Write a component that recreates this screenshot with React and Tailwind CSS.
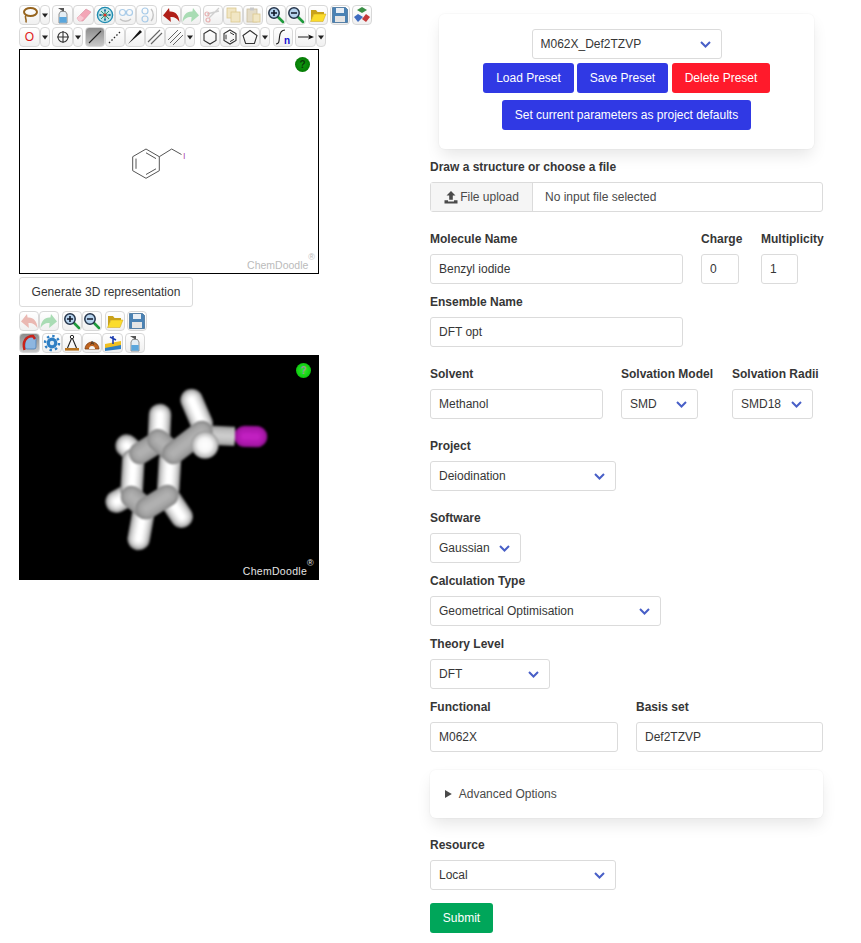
const Svg = ({ children }) => (
    <svg viewBox="0 0 18 18" className="w-[18px] h-[18px] block">{children}</svg>
);

const Lasso = () => (
    <Svg>
        <ellipse cx="9.5" cy="6" rx="6.5" ry="4" fill="none" stroke="#96641e" strokeWidth="2" />
        <path d="M5 9.5c-2 2 1 3 0 7" fill="none" stroke="#96641e" strokeWidth="1.6" />
    </Svg>
);
const Bottle = () => (
    <Svg>
        <path d="M4 2h6v3H8.5z" fill="#555" />
        <path d="M6.5 5.5h5l1.5 2.5v9H5V8z" fill="#e4eef5" stroke="#666" strokeWidth="0.7" />
        <rect x="5.3" y="11" width="7.4" height="5.7" fill="#5aa6dc" />
    </Svg>
);
const Eraser = () => (
    <Svg>
        <polygon points="2,12 11,3 16,6 8,15 4,15" fill="#f3a6b7" stroke="#d9909f" strokeWidth="0.6" />
        <polygon points="2,12 5,9 9,12 6,15 4,15" fill="#f8c8d2" />
    </Svg>
);
const Center = () => (
    <Svg>
        <circle cx="9" cy="9" r="7.6" fill="#bfe3ea" stroke="#1f8bb0" strokeWidth="1.4" />
        <path d="M9 3v12M3 9h12M5 5l8 8M13 5L5 13" stroke="#1a8f6a" strokeWidth="0.9" />
        <circle cx="9" cy="9" r="1.6" fill="#d9332a" />
        <circle cx="9" cy="4.5" r="1" fill="#1f6bb0" />
        <circle cx="9" cy="13.5" r="1" fill="#1f6bb0" />
        <circle cx="4.5" cy="9" r="1" fill="#1f6bb0" />
        <circle cx="13.5" cy="9" r="1" fill="#1f6bb0" />
    </Svg>
);
const FlipH = () => (
    <Svg>
        <circle cx="5.5" cy="6.5" r="3" fill="none" stroke="#a9cbe8" strokeWidth="1.2" />
        <circle cx="12.5" cy="6.5" r="3" fill="none" stroke="#a9cbe8" strokeWidth="1.2" />
        <path d="M3 13c3 3 8 3 11 0" fill="none" stroke="#c4c4c4" strokeWidth="1.4" />
    </Svg>
);
const FlipV = () => (
    <Svg>
        <circle cx="7" cy="5" r="3" fill="none" stroke="#a9cbe8" strokeWidth="1.2" />
        <circle cx="7" cy="13" r="3" fill="none" stroke="#a9cbe8" strokeWidth="1.2" />
        <path d="M13 3c3 3 3 9 0 12" fill="none" stroke="#c4c4c4" strokeWidth="1.4" />
    </Svg>
);
const Undo = ({ faded }) => (
    <Svg>
        <path d="M1 9.5L7 2l.6 3.6C13 5 17 9 17.5 16 15 12 12 10.5 8.4 11l.5 5z" fill={faded ? "#eab8b2" : "#b01f18"} />
    </Svg>
);
const Redo = () => (
    <Svg>
        <path d="M17 9.5L11 2l-.6 3.6C5 5 1 9 .5 16 3 12 6 10.5 9.6 11l-.5 5z" fill="#a9dcb4" />
    </Svg>
);
const Scissors = () => (
    <Svg>
        <path d="M15 2L5 12M15 5L3 8" stroke="#cfcfcf" strokeWidth="1.3" />
        <circle cx="4" cy="14" r="2" fill="none" stroke="#e7b0b0" strokeWidth="1.2" />
        <circle cx="3" cy="8" r="2" fill="none" stroke="#e7b0b0" strokeWidth="1.2" />
    </Svg>
);
const Copy = () => (
    <Svg>
        <rect x="3" y="2" width="9" height="10" fill="#f1e6c4" stroke="#dcc98e" strokeWidth="0.8" />
        <rect x="7" y="6" width="9" height="10" fill="#f1e6c4" stroke="#dcc98e" strokeWidth="0.8" />
    </Svg>
);
const Paste = () => (
    <Svg>
        <rect x="3" y="3" width="10" height="13" fill="#e4dcc8" stroke="#cbbf9f" strokeWidth="0.8" />
        <rect x="6" y="1.5" width="4" height="3" fill="#c9c9c9" />
        <rect x="9" y="8" width="7" height="8" fill="#f1e6c4" stroke="#dcc98e" strokeWidth="0.8" />
    </Svg>
);
const Zoom = ({ plus }) => (
    <Svg>
        <path d="M10 10l6 6" stroke="#1f9a3c" strokeWidth="2.6" strokeLinecap="round" />
        <circle cx="7" cy="7" r="5.2" fill="#b6d3ee" stroke="#24344a" strokeWidth="1.5" />
        <path d="M4 7h6" stroke="#10182a" strokeWidth="1.6" />
        {plus && <path d="M7 4v6" stroke="#10182a" strokeWidth="1.6" />}
    </Svg>
);
const Folder = () => (
    <Svg>
        <path d="M2 15V4h5l1.5 2H15v2H5z" fill="#c9a21a" />
        <path d="M1.5 15.5L5 8h12l-3 7.5z" fill="#fbdc2c" stroke="#c9a21a" strokeWidth="0.5" />
    </Svg>
);
const Save = () => (
    <Svg>
        <path d="M1.5 1.5h13l2 2v13h-15z" fill="#4a82b4" stroke="#2a5a88" strokeWidth="0.6" />
        <rect x="5" y="2" width="8" height="5" fill="#e8eef5" />
        <rect x="4" y="10" width="10" height="6" fill="#e4e4e4" />
    </Svg>
);
const Templates = () => (
    <Svg>
        <polygon points="9,1 14,4 9,7 4,4" fill="#3a8f45" />
        <polygon points="5,8 10,11 5,16 1,11" fill="#3f6cc0" />
        <polygon points="13,8 17,11 13,16 9,13" fill="#c43a3a" />
    </Svg>
);
const Caret = () => (
    <svg viewBox="0 0 8 8" className="w-2 h-2 block">
        <path d="M1 2.5h6L4 6.5z" fill="#222" />
    </svg>
);
const Plus = () => (
    <Svg>
        <circle cx="9" cy="9" r="5" fill="none" stroke="#333" strokeWidth="1.1" />
        <path d="M9 3v12M3 9h12" stroke="#333" strokeWidth="1.1" />
    </Svg>
);
const Bond = () => (
    <Svg>
        <path d="M3 15L15 3" stroke="#222" strokeWidth="1.1" />
    </Svg>
);
const Dots = () => (
    <Svg>
        <path d="M3 15L15 3" stroke="#222" strokeWidth="1.3" strokeDasharray="1.5 2" />
    </Svg>
);
const Wedge = () => (
    <Svg>
        <polygon points="2,16 14,2 16,4" fill="#111" />
    </Svg>
);
const DoubleBond = () => (
    <Svg>
        <path d="M2 14L14 2M5 16L16 5" stroke="#666" strokeWidth="1.1" />
    </Svg>
);
const TripleBond = () => (
    <Svg>
        <path d="M2 12L12 2M4 15L15 4M7 17L17 7" stroke="#666" strokeWidth="1" />
    </Svg>
);
const Hexagon = () => (
    <Svg>
        <polygon points="9,2 15,5.5 15,12.5 9,16 3,12.5 3,5.5" fill="none" stroke="#333" strokeWidth="1.1" />
    </Svg>
);
const Benzene = () => (
    <Svg>
        <polygon points="9,2 15,5.5 15,12.5 9,16 3,12.5 3,5.5" fill="none" stroke="#333" strokeWidth="1.1" />
        <path d="M9 4.5l4 2.3M13 11.3l-4 2.3M5 11.3V6.7" stroke="#333" strokeWidth="1" />
    </Svg>
);
const Pentagon = () => (
    <Svg>
        <polygon points="9,2.5 16,7.5 13.4,15.5 4.6,15.5 2,7.5" fill="none" stroke="#333" strokeWidth="1.1" />
    </Svg>
);
const Repeat = () => (
    <svg viewBox="0 0 18 18" className="w-[18px] h-[18px] block">
        <path d="M2 16c3 0 3-2 3.5-7S8 2 11 2" fill="none" stroke="#222" strokeWidth="1.1" />
        <text x="10" y="16" fontSize="10" fontWeight="700" fill="#1212d0" fontFamily="Liberation Sans, sans-serif">n</text>
    </svg>
);
const Arrow = () => (
    <Svg>
        <path d="M1 9h12" stroke="#222" strokeWidth="1.1" />
        <path d="M17 9l-6-2.5 1.5 2.5-1.5 2.5z" fill="#111" />
    </Svg>
);
const Perspective = () => (
    <Svg>
        <rect x="4" y="3" width="11" height="12" rx="2" fill="#8eb6e0" stroke="#4d7fb8" strokeWidth="0.8" />
        <path d="M3.5 16C1 8 5 2 12 2l2 3" fill="none" stroke="#c9231b" strokeWidth="2.4" />
    </Svg>
);
const Gear = () => (
    <Svg>
        <circle cx="9" cy="9" r="5.4" fill="#2f7fc4" />
        <circle cx="9" cy="9" r="7" fill="none" stroke="#2f7fc4" strokeWidth="2.4" strokeDasharray="2.4 3.1" />
        <circle cx="9" cy="9" r="2.2" fill="#dcebf7" />
    </Svg>
);
const Compass = () => (
    <Svg>
        <circle cx="9" cy="3" r="1.7" fill="none" stroke="#222" strokeWidth="1" />
        <path d="M8.5 4.5L4.5 14M9.5 4.5L13.5 14" stroke="#222" strokeWidth="1.1" />
        <rect x="2" y="14" width="14" height="2.6" fill="#b8741f" />
    </Svg>
);
const Protractor = () => (
    <Svg>
        <path d="M2 15a7 7 0 0 1 14 0z" fill="#c0641f" stroke="#7c3c10" strokeWidth="0.8" />
        <path d="M6 15a3 3 0 0 1 6 0z" fill="#f4f4f4" />
        <text x="9" y="11" textAnchor="middle" fontSize="6" fill="#222" fontFamily="Liberation Sans, sans-serif">A</text>
    </Svg>
);
const Torsion = () => (
    <Svg>
        <polygon points="1,10 17,7 17,13 1,16" fill="#f0c020" />
        <polygon points="1,14 17,11 17,15 1,17" fill="#2f7fc4" />
        <path d="M9 2v8M6 3l6 3" stroke="#1f3fb0" strokeWidth="1.6" />
    </Svg>
);

const Btn = ({ className = "w-5", active, children }) => (
    <div
        className={`${className} h-5 shrink-0 box-border border border-[#d8d8d8] rounded-[4px] flex items-center justify-center overflow-hidden ${
            active ? "bg-gradient-to-b from-[#8c8c8c] to-[#c8c8c8]" : "bg-gradient-to-b from-[#ffffff] to-[#f0f0f0]"
        }`}
    >
        {children}
    </div>
);

const Dd = () => (
    <Btn className="w-[10px]">
        <Caret />
    </Btn>
);

const Badge = ({ className }) => (
    <div className={`absolute right-[8px] w-[15px] h-[15px] rounded-full flex items-center justify-center text-[10px] font-bold leading-none ${className}`}>
        ?
    </div>
);

const Sketcher = () => (
    <svg viewBox="19 49 300 225" className="absolute -inset-px w-[300px] h-[225px]">
        <g fill="none" stroke="#555" strokeWidth="1">
            <polygon points="146,149 159.3,156.7 159.3,170.7 146,178.3 132.7,170.7 132.7,156.7" />
            <path d="M146 152.8L156 158.6M156 168.8L146 174.5M136 168.8V158.6" />
            <path d="M159.3 156.7L171.7 149L181.5 154.5" />
        </g>
        <text x="183" y="159" fontSize="9" fill="#b050b0" fontFamily="Liberation Sans, sans-serif">I</text>
    </svg>
);

const whiteTube = [[68, "#7f7f7f"], [62, "#a8a8a8"], [54, "#c6c6c6"], [44, "#dddddd"], [32, "#f0f0f0"], [18, "#ffffff"]];
const grayTube = [[66, "#8a8a8a"], [56, "#9c9c9c"], [40, "#a8a8a8"], [20, "#b0b0b0"]];
const lightTube = [[58, "#8a8a8a"], [50, "#ababab"], [36, "#c0c0c0"], [16, "#cbcbcb"]];
const purpleTube = [[64, "#8c128c"], [56, "#a416a4"], [42, "#b41ab4"], [20, "#c020c0"]];

const Tube = ({ from, to, layers = whiteTube, cap = "round" }) => (
    <g strokeLinecap={cap} fill="none">
        {layers.map(([width, color]) => (
            <line key={width} x1={from[0]} y1={from[1]} x2={to[0]} y2={to[1]} stroke={color} strokeWidth={width} />
        ))}
    </g>
);

const Molecule = () => {
    return (
        <svg viewBox="19 355 300 225" className="absolute inset-0 w-[300px] h-[225px] blur-[0.8px]">
            <defs>
                <radialGradient id="hydrogen">
                    <stop offset="0" stopColor="#ffffff" />
                    <stop offset="0.5" stopColor="#f6f6f6" />
                    <stop offset="0.85" stopColor="#c2c2c2" />
                    <stop offset="1" stopColor="#8f8f8f" />
                </radialGradient>
            </defs>
            <g transform="translate(90 375) scale(0.3333)">
                <Tube from={[110, 212]} to={[135, 235]} />
                <Tube from={[80, 380]} to={[125, 355]} />
                <Tube from={[210, 120]} to={[207, 185]} />
                <Tube from={[305, 75]} to={[335, 145]} />
                <Tube from={[130, 255]} to={[125, 345]} />
                <Tube from={[146, 492]} to={[160, 415]} />
                <Tube from={[275, 425]} to={[235, 365]} />
                <Tube from={[464, 184]} to={[500, 185]} layers={purpleTube} />
                <Tube from={[345, 180]} to={[434, 184]} layers={lightTube} cap="butt" />
                <Tube from={[165, 400]} to={[125, 365]} layers={grayTube} />
                <Tube from={[205, 200]} to={[150, 235]} layers={grayTube} />
                <Tube from={[240, 255]} to={[235, 340]} />
                <Tube from={[170, 400]} to={[232, 362]} layers={grayTube} />
                <Tube from={[205, 195]} to={[240, 225]} layers={grayTube} />
                <Tube from={[250, 235]} to={[335, 170]} layers={grayTube} />
                <circle cx="345" cy="210" r="41" fill="url(#hydrogen)" />
            </g>
        </svg>
    );
};

const Watermark = ({ className }) => (
    <div className={`absolute text-[10.5px] leading-none font-['Liberation_Sans',sans-serif] ${className}`}>
        ChemDoodle<sup className="text-[9px] align-super leading-none">®</sup>
    </div>
);

const Chevron = () => (
    <svg viewBox="0 0 11 7" className="absolute right-[11px] top-[12px] w-[11px] h-[7px] pointer-events-none">
        <path d="M1 1l4.5 4.5L10 1" fill="none" stroke="#485fc7" strokeWidth="2" />
    </svg>
);

const Label = ({ children, className = "" }) => (
    <label className={`block h-[18px] mb-[7px] text-xs leading-[20px] font-bold text-[#363636] whitespace-nowrap ${className}`}>
        {children}
    </label>
);

const Input = ({ value, className = "w-full" }) => (
    <input
        readOnly
        value={value}
        className={`${className} block h-[30px] box-border px-2 border border-[#dbdbdb] rounded-[3px] bg-white text-xs text-[#363636] outline-none`}
    />
);

const Select = ({ value, className = "w-full" }) => (
    <div className={`${className} relative h-[30px]`}>
        <select
            defaultValue={value}
            className="w-full h-[30px] block box-border pl-2 pr-6 border border-[#dbdbdb] rounded-[3px] bg-white text-xs text-[#363636] appearance-none outline-none"
        >
            <option>{value}</option>
        </select>
        <Chevron />
    </div>
);

const ActionButton = ({ children, className }) => (
    <button className={`${className} h-[30px] rounded-[3px] text-xs text-white whitespace-nowrap`}>{children}</button>
);

const App = () => {
    return (
        <div className="flex items-start h-[943px] bg-white overflow-hidden font-['Liberation_Sans',Arial,sans-serif]">
            <div className="ml-[19px] w-[300px] shrink-0 pt-[5px]">
                <div className="flex h-5 w-[360px]">
                    <Btn className="w-[21px]"><Lasso /></Btn>
                    <Dd />
                    <div className="ml-[2px] flex">
                        <Btn className="w-[21px]"><Bottle /></Btn>
                        <Btn className="w-[21px]"><Eraser /></Btn>
                        <Btn className="w-[21px]"><Center /></Btn>
                        <Btn className="w-[21px]"><FlipH /></Btn>
                        <Btn className="w-[21px]"><FlipV /></Btn>
                    </div>
                    <div className="ml-[4px] flex">
                        <Btn><Undo /></Btn>
                        <Btn><Redo /></Btn>
                    </div>
                    <div className="ml-[2px] flex">
                        <Btn><Scissors /></Btn>
                        <Btn><Copy /></Btn>
                        <Btn><Paste /></Btn>
                    </div>
                    <div className="ml-[3px] flex">
                        <Btn><Zoom plus /></Btn>
                        <Btn><Zoom /></Btn>
                    </div>
                    <div className="ml-[2px]"><Btn><Folder /></Btn></div>
                    <div className="ml-[2px]"><Btn><Save /></Btn></div>
                    <div className="ml-[2px]"><Btn><Templates /></Btn></div>
                </div>

                <div className="flex h-5 mt-[2px] w-[360px]">
                    <Btn className="w-[21px]">
                        <span className="text-xs leading-none text-[#e02020]">O</span>
                    </Btn>
                    <Dd />
                    <div className="ml-[2px] flex">
                        <Btn className="w-[21px]"><Plus /></Btn>
                        <Dd />
                    </div>
                    <div className="ml-[2px] flex">
                        <Btn active><Bond /></Btn>
                        <Btn><Dots /></Btn>
                        <Btn><Wedge /></Btn>
                        <Btn><DoubleBond /></Btn>
                        <Btn><TripleBond /></Btn>
                        <Dd />
                    </div>
                    <div className="ml-[5px] flex">
                        <Btn><Hexagon /></Btn>
                        <Btn><Benzene /></Btn>
                        <Btn><Pentagon /></Btn>
                        <Dd />
                    </div>
                    <div className="ml-[3px]"><Btn><Repeat /></Btn></div>
                    <div className="ml-[2px] flex">
                        <Btn className="w-[21px]"><Arrow /></Btn>
                        <Dd />
                    </div>
                </div>

                <div className="relative mt-[2px] w-[300px] h-[225px] box-border border border-black bg-white">
                    <Sketcher />
                    <Badge className="top-[7px] bg-[radial-gradient(circle,#109a10,#006e00)] text-[#0a3a0a]" />
                    <Watermark className="right-[3px] bottom-[3px] text-[#bbbbbb]" />
                </div>

                <button className="mt-[3px] block w-[174px] h-[30px] box-border border border-[#dbdbdb] rounded-[3px] bg-white text-xs text-[#363636]">
                    Generate 3D representation
                </button>

                <div className="flex h-5 mt-[4px]">
                    <Btn><Undo faded /></Btn>
                    <Btn><Redo /></Btn>
                    <div className="ml-[3px] flex">
                        <Btn><Zoom plus /></Btn>
                        <Btn><Zoom /></Btn>
                    </div>
                    <div className="ml-[3px]"><Btn><Folder /></Btn></div>
                    <div className="ml-[2px]"><Btn><Save /></Btn></div>
                </div>
                <div className="flex h-5 mt-[2px]">
                    <Btn className="w-[21px]" active><Perspective /></Btn>
                    <div className="ml-[2px] flex">
                        <Btn><Gear /></Btn>
                        <Btn><Compass /></Btn>
                        <Btn><Protractor /></Btn>
                        <Btn className="w-[21px]"><Torsion /></Btn>
                    </div>
                    <div className="ml-[2px]"><Btn><Bottle /></Btn></div>
                </div>

                <div className="relative mt-[2px] w-[300px] h-[225px] bg-black">
                    <Molecule />
                    <Badge className="top-[8px] bg-[radial-gradient(circle,#30f030,#00b800)] text-[#9a9a9a]" />
                    <Watermark className="right-[5px] bottom-[4px] text-[#e4e4e4] tracking-[0.3px]" />
                </div>
            </div>

            <div className="ml-[111px] w-[393px] shrink-0 pt-[14px]">
                <div className="mx-[9px] w-[375px] h-[135px] box-border pt-[15px] rounded-md bg-white shadow-[0_8px_16px_-2px_rgba(10,10,10,0.1),0_0_0_1px_rgba(10,10,10,0.02)] flex flex-col items-center">
                    <Select value="M062X_Def2TZVP" className="w-[190px]" />
                    <div className="mt-1 flex gap-[3px]">
                        <ActionButton className="w-[91px] bg-[#3039e4]">Load Preset</ActionButton>
                        <ActionButton className="w-[91px] bg-[#3039e4]">Save Preset</ActionButton>
                        <ActionButton className="ml-px w-[98px] bg-[#ff1a2b]">Delete Preset</ActionButton>
                    </div>
                    <ActionButton className="mt-[7px] w-[249px] bg-[#3039e4]">Set current parameters as project defaults</ActionButton>
                </div>

                <div className="mt-2">
                    <Label>Draw a structure or choose a file</Label>
                    <div className="flex h-[30px] border border-[#dbdbdb] rounded-[3px] box-border text-xs">
                        <div className="w-[102px] shrink-0 bg-[#f5f5f5] border-r border-[#dbdbdb] flex items-center justify-center gap-[2px] text-[#4a4a4a]">
                            <svg viewBox="0 0 14 14" className="w-[14px] h-[14px]">
                                <path d="M7 1L2.5 5.5H5.2V9.8H8.8V5.5H11.5zM.5 10.2H4V11.6H10V10.2H13.5V13.5H.5z" fill="#4a4a4a" />
                            </svg>
                            File upload
                        </div>
                        <div className="pl-3 flex items-center text-[#4a4a4a]">No input file selected</div>
                    </div>
                </div>

                <div className="mt-[17px] flex">
                    <div className="w-[253px]">
                        <Label>Molecule Name</Label>
                        <Input value="Benzyl iodide" />
                    </div>
                    <div className="ml-[18px] w-[38px]">
                        <Label>Charge</Label>
                        <Input value="0" />
                    </div>
                    <div className="ml-[22px] w-[37px]">
                        <Label>Multiplicity</Label>
                        <Input value="1" />
                    </div>
                </div>

                <div className="mt-2 w-[253px]">
                    <Label>Ensemble Name</Label>
                    <Input value="DFT opt" />
                </div>

                <div className="mt-[17px] flex">
                    <div className="w-[173px]">
                        <Label>Solvent</Label>
                        <Input value="Methanol" />
                    </div>
                    <div className="ml-[18px] w-[77px]">
                        <Label>Solvation Model</Label>
                        <Select value="SMD" />
                    </div>
                    <div className="ml-[34px] w-[81px]">
                        <Label>Solvation Radii</Label>
                        <Select value="SMD18" />
                    </div>
                </div>

                <div className="mt-[17px] w-[186px]">
                    <Label>Project</Label>
                    <Select value="Deiodination" />
                </div>

                <div className="mt-[17px] w-[91px]">
                    <Label>Software</Label>
                    <Select value="Gaussian" />
                </div>

                <div className="mt-2 w-[231px]">
                    <Label>Calculation Type</Label>
                    <Select value="Geometrical Optimisation" />
                </div>

                <div className="mt-2 w-[120px]">
                    <Label>Theory Level</Label>
                    <Select value="DFT" />
                </div>

                <div className="mt-2 flex gap-[18px]">
                    <div className="w-[188px]">
                        <Label>Functional</Label>
                        <Input value="M062X" />
                    </div>
                    <div className="w-[187px]">
                        <Label>Basis set</Label>
                        <Input value="Def2TZVP" />
                    </div>
                </div>

                <details className="mt-[18px] h-12 box-border p-[15px] rounded-md bg-white text-xs leading-[18px] text-[#4a4a4a] shadow-[0_8px_16px_-2px_rgba(10,10,10,0.1),0_0_0_1px_rgba(10,10,10,0.02)]">
                    <summary><span className="ml-px">Advanced Options</span></summary>
                </details>

                <div className="mt-[17px] w-[186px]">
                    <Label>Resource</Label>
                    <Select value="Local" />
                </div>

                <ActionButton className="mt-[13px] w-[63px] bg-[#00a65a]">Submit</ActionButton>
            </div>
        </div>
    );
};

export default App;
